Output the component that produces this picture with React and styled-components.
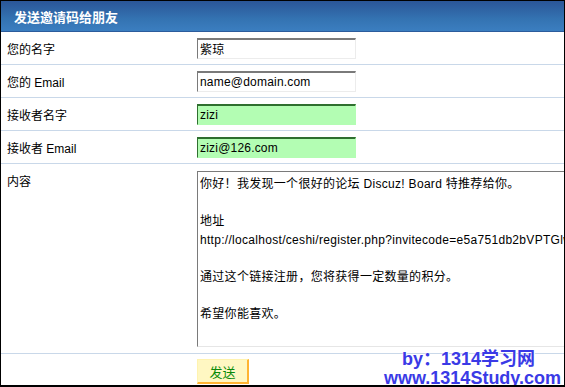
import styled, { createGlobalStyle } from 'styled-components'

const GlobalStyle = createGlobalStyle`
	html,
	body {
		margin: 0;
		padding: 0;
		background: #ffffff;
	}
	body {
		font-family: 'Liberation Sans', 'Noto Sans CJK SC', sans-serif;
		font-size: 12px;
		color: #000000;
	}
`

const message = [
	'你好！我发现一个很好的论坛 Discuz! Board 特推荐给你。',
	'',
	'地址',
	'http://localhost/ceshi/register.php?invitecode=e5a751db2bVPTGlw7xQ&reg=1',
	'',
	'通过这个链接注册，您将获得一定数量的积分。',
	'',
	'希望你能喜欢。',
].join('\n')

const fields = [
	{ label: '您的名字', value: '紫琼', highlight: false },
	{ label: '您的 Email', value: 'name@domain.com', highlight: false },
	{ label: '接收者名字', value: 'zizi', highlight: true },
	{ label: '接收者 Email', value: 'zizi@126.com', highlight: true },
]

const App = () => {
	return (
		<>
			<GlobalStyle />
			<Panel>
				<Header>发送邀请码给朋友</Header>

				{fields.map((f) => (
					<Row key={f.label}>
						<Label>{f.label}</Label>
						<Cell>
							<Input $highlight={f.highlight} defaultValue={f.value} />
						</Cell>
					</Row>
				))}

				<Row $tall>
					<Label $top>内容</Label>
					<Cell $top>
						<Message wrap="off" defaultValue={message} />
					</Cell>
				</Row>

				<Footer>
					<div />
					<Cell $top>
						<SendButton type="button">发送</SendButton>
					</Cell>
				</Footer>

				<Watermark>
					<span className="by">by：1314学习网</span>
					<span>www.1314Study.com</span>
				</Watermark>
			</Panel>
		</>
	)
}

export default App

// ? styled
const Panel = styled.div`
	position: relative;
	width: 565px;
	height: 387px;
	box-sizing: border-box;
	border: 1px solid #000000;
	border-bottom-width: 2px;
	overflow: hidden;
	display: flex;
	flex-direction: column;
	background: #ffffff;
`

const Header = styled.div`
	height: 30px;
	border-bottom: 1px solid #2c5c9c;
	background: linear-gradient(to bottom, #2b5698 0%, #3473b2 60%, #3b7ec0 100%);
	color: #ffffff;
	font-family: 'Noto Sans CJK SC', sans-serif;
	font-weight: bold;
	font-size: 13px;
	display: flex;
	align-items: center;
	padding-left: 13px;
	flex-shrink: 0;
`

const Row = styled.div`
	display: grid;
	grid-template-columns: 196px 1fr;
	height: ${(p) => (p.$tall ? '189px' : '32px')};
	border-bottom: 1px solid #c9d8e9;
	flex-shrink: 0;
`

const Footer = styled.div`
	display: grid;
	grid-template-columns: 196px 1fr;
	flex: 1;
`

const Label = styled.div`
	display: flex;
	align-items: ${(p) => (p.$top ? 'flex-start' : 'center')};
	padding-left: 6px;
	padding-top: ${(p) => (p.$top ? '8px' : '0')};
	font-family: 'Liberation Sans', 'Noto Sans CJK SC', sans-serif;
	font-size: 12px;
`

const Cell = styled.div`
	display: flex;
	align-items: ${(p) => (p.$top ? 'flex-start' : 'center')};
	overflow: hidden;
`

const Input = styled.input`
	box-sizing: border-box;
	width: 159px;
	height: 21px;
	margin: 0;
	padding: 0 2px;
	outline: none;
	font-family: 'Liberation Sans', 'Noto Sans CJK SC', sans-serif;
	font-size: 12px;
	letter-spacing: 0.2px;
	color: #000000;
	border-style: solid;
	border-width: 2px 1px 1px 1px;
	border-color: ${(p) =>
		p.$highlight ? '#2f6f2f #b3fdb3 #b3fdb3 #2f6f2f' : '#7a7a7a #ececec #ececec #7a7a7a'};
	background: ${(p) => (p.$highlight ? '#b3fdb3' : '#ffffff')};
`

const Message = styled.textarea`
	box-sizing: border-box;
	flex-shrink: 0;
	width: 440px;
	height: 176px;
	margin: 7px 0 0 0;
	padding: 3px 2px;
	resize: none;
	outline: none;
	overflow: hidden;
	white-space: pre;
	font-family: 'Liberation Sans', 'Noto Sans CJK SC', sans-serif;
	font-size: 12px;
	letter-spacing: 0.3px;
	line-height: 18.5px;
	color: #000000;
	background: #ffffff;
	border-style: solid;
	border-width: 1px;
	border-color: #7a7a7a #e6e6e6 #e6e6e6 #7a7a7a;
`

const SendButton = styled.button`
	box-sizing: border-box;
	width: 52px;
	height: 25px;
	margin-top: 5px;
	padding: 0;
	background: #fff7c2;
	border-style: solid;
	border-width: 1px 2px 2px 1px;
	border-color: #fff3b0 #ffb432 #ffb432 #fff3b0;
	color: #0a8a0a;
	font-family: 'Noto Sans CJK SC', sans-serif;
	font-size: 13px;
	cursor: pointer;
`

const Watermark = styled.div`
	position: absolute;
	left: 383px;
	top: 349px;
	display: flex;
	flex-direction: column;
	font-family: 'Liberation Sans', 'Noto Sans CJK SC', sans-serif;
	font-weight: bold;
	font-size: 18px;
	line-height: 19px;
	color: #3a3ae6;
	text-shadow: 0 0 2px #ffffff, 1px 1px 0 #ffffff;
	white-space: nowrap;

	span.by {
		padding-left: 18px;
	}
`
